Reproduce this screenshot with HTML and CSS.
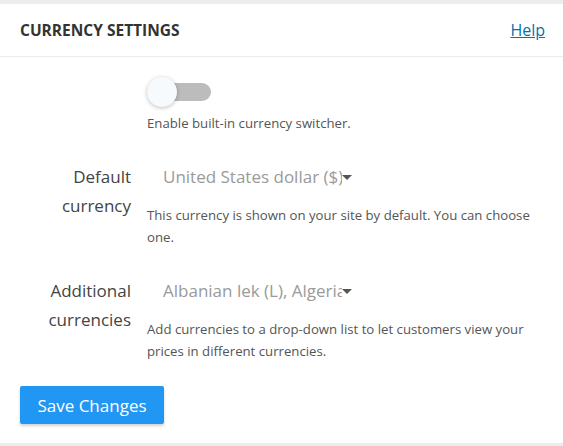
FILE: index.html
```html
<!DOCTYPE html>
<html>
<head>
<meta charset="utf-8">
<link rel="stylesheet" href="styles.css">
</head>
<body>
<div class="page">
  <div class="card">
    <div class="card-header">
      <h2 class="title">CURRENCY SETTINGS</h2>
      <a class="help" href="#">Help</a>
    </div>
    <div class="card-body">
      <div class="row">
        <div class="label"></div>
        <div class="field">
          <div class="toggle"><span class="track"></span><span class="knob"></span></div>
          <p class="desc toggle-desc">Enable built-in currency switcher.</p>
        </div>
      </div>
      <div class="row row-gap">
        <div class="label">Default currency</div>
        <div class="field">
          <div class="select"><span class="select-text">United States dollar ($)</span><span class="caret"></span></div>
          <p class="desc">This currency is shown on your site by default. You can choose one.</p>
        </div>
      </div>
      <div class="row row-gap">
        <div class="label">Additional currencies</div>
        <div class="field">
          <div class="select"><span class="select-text">Albanian lek (L), Algerian dinar (د.ج)</span><span class="caret"></span></div>
          <p class="desc">Add currencies to a drop-down list to let customers view your prices in different currencies.</p>
        </div>
      </div>
      <button class="btn">Save Changes</button>
    </div>
  </div>
</div>
</body>
</html>
```

FILE: styles.css
```css
html, body {
  margin: 0;
  padding: 0;
  background: #ececec;
}
body {
  font-family: "Open Sans", "Noto Sans", sans-serif;
  width: 563px;
  height: 446px;
  overflow: hidden;
}
.page {
  padding-top: 4px;
}
.card {
  background: #fff;
  height: 439px;
}
.card-header {
  display: flex;
  align-items: center;
  justify-content: space-between;
  height: 52px;
  padding: 0 18px 0 20px;
  border-bottom: 1px solid #ebebeb;
}
.title {
  margin: 0;
  font-size: 15.5px;
  font-weight: 700;
  color: #333;
  letter-spacing: 0;
}
.help {
  color: #0073aa;
  font-size: 16px;
  text-decoration: underline;
}
.card-body {
  padding: 20px 20px 0 20px;
}
.row {
  display: flex;
  gap: 16px;
}
.row-gap {
  margin-top: 28px;
}
.label {
  width: 111px;
  flex: none;
  text-align: right;
  font-size: 17px;
  line-height: 29px;
  color: #444;
}
.field {
  flex: 1;
  min-width: 0;
}
.toggle {
  position: relative;
  width: 64px;
  height: 30px;
}
.track {
  position: absolute;
  left: 0;
  top: 6px;
  width: 64px;
  height: 18px;
  border-radius: 9px;
  background: #bcbcbc;
}
.knob {
  position: absolute;
  left: 0;
  top: 0;
  width: 30px;
  height: 30px;
  border-radius: 50%;
  background: #f7fafc;
  box-shadow: 0 1px 4px rgba(0,0,0,0.25);
}
.desc {
  margin: 12px 0 0 0;
  font-size: 13.2px;
  line-height: 22px;
  color: #555;
}
.toggle-desc {
  margin-top: 5px;
}
.select {
  display: flex;
  align-items: center;
  width: 210px;
  height: 30px;
  padding-left: 16px;
  box-sizing: border-box;
}
.select-text {
  width: 179px;
  flex: none;
  overflow: hidden;
  white-space: nowrap;
  font-size: 17px;
  line-height: 30px;
  color: #9a9a9a;
}
.caret {
  width: 0;
  height: 0;
  border-left: 5px solid transparent;
  border-right: 5px solid transparent;
  border-top: 5px solid #555;
  margin-left: 0;
}
.btn {
  margin-top: 24px;
  display: block;
  width: 144px;
  height: 38px;
  border: none;
  border-radius: 2px;
  background: #2196f3;
  color: #fff;
  font-family: "Open Sans", "Noto Sans", sans-serif;
  font-size: 17px;
  box-shadow: 0 2px 3px rgba(0,0,0,0.18);
  padding: 0;
}
```
